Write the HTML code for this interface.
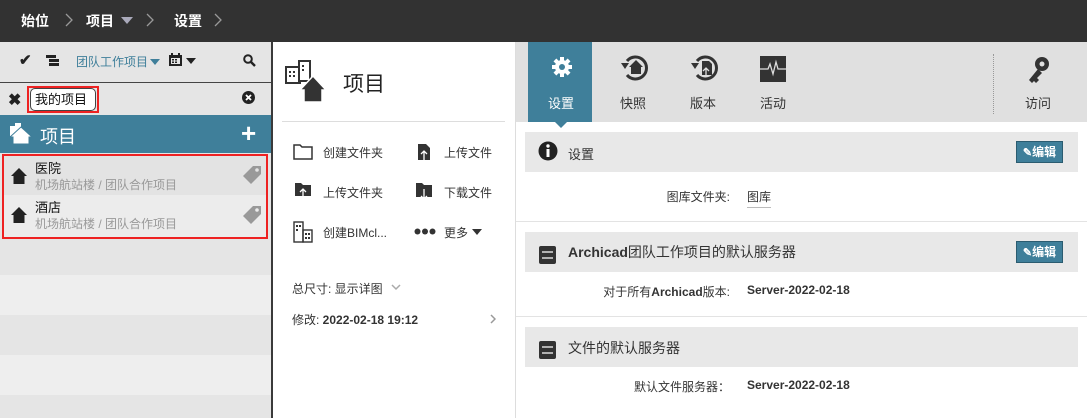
<!DOCTYPE html>
<html><head><meta charset="utf-8"><style>
*{margin:0;padding:0;box-sizing:border-box}
body{width:1087px;height:418px;overflow:hidden;font-family:"Liberation Sans","Noto Sans CJK SC",sans-serif;font-size:13px;color:#333;background:#fff;position:relative}
.a{position:absolute}
.top{left:0;top:0;width:1087px;height:42px;background:#323232;color:#fff;font-size:14px;font-weight:bold}
.left{left:0;top:42px;width:271px;height:376px;background:#e5e5e5}
.vb{left:271px;top:42px;width:2px;height:376px;background:#3a3a3a}
.stripe{left:0;width:271px;height:40px}
.btn{background:#3f7f9a;color:#fff;font-size:12px;font-weight:bold;border:1px solid #2b5c70;height:22px;width:47px;line-height:20px;text-align:center}
.hdr{left:525px;width:553px;height:40px;background:#e8e8e8}
.lbl{font-size:12px;color:#333}
</style></head><body>
<div class="a top">
 <span class="a" style="left:21px;top:11px">始位</span>
 <svg class="a" style="left:65px;top:13px" width="8" height="14"><path d="M1 1l6 6-6 6" stroke="#999" stroke-width="1.3" fill="none"/></svg>
 <span class="a" style="left:86px;top:11px">项目</span>
 <svg class="a" style="left:121px;top:17px" width="12" height="7"><path d="M0 0h12L6 7z" fill="#aab"/></svg>
 <svg class="a" style="left:146px;top:13px" width="8" height="14"><path d="M1 1l6 6-6 6" stroke="#999" stroke-width="1.3" fill="none"/></svg>
 <span class="a" style="left:174px;top:11px">设置</span>
 <svg class="a" style="left:214px;top:13px" width="8" height="14"><path d="M1 1l6 6-6 6" stroke="#999" stroke-width="1.3" fill="none"/></svg>
</div>
<div class="a left"></div>
<div class="a" style="left:0;top:82px;width:271px;height:1px;background:#444"></div>
<div class="a stripe" style="top:238px;height:37px;background:#e5e5e5"></div>
<div class="a stripe" style="top:275px;background:#eeeeee"></div>
<div class="a stripe" style="top:355px;background:#eeeeee"></div>
<span class="a" style="left:19px;top:51px;font-size:15px;font-weight:bold;color:#222">✔</span>
<svg class="a" style="left:46px;top:55px" width="13" height="12"><rect x="0" y="0" width="10" height="3" fill="#222"/><rect x="3" y="4" width="10" height="3" fill="#222"/><rect x="3" y="8" width="10" height="3" fill="#222"/></svg>
<span class="a" style="left:76px;top:53px;font-size:12px;color:#3f7f9a">团队工作项目</span>
<svg class="a" style="left:150px;top:59px" width="10" height="6"><path d="M0 0h10L5 6z" fill="#3f7f9a"/></svg>
<svg class="a" style="left:169px;top:53px" width="13" height="13"><rect x="0" y="2" width="13" height="11" fill="#222"/><rect x="2" y="5" width="9" height="6" fill="#e5e5e5"/><rect x="3" y="6" width="2" height="1.5" fill="#222"/><rect x="6" y="6" width="2" height="1.5" fill="#222"/><rect x="3" y="8.5" width="2" height="1.5" fill="#222"/><rect x="6" y="8.5" width="2" height="1.5" fill="#222"/><rect x="2" y="0" width="2" height="3" fill="#222"/><rect x="9" y="0" width="2" height="3" fill="#222"/></svg>
<svg class="a" style="left:186px;top:58px" width="10" height="6"><path d="M0 0h10L5 6z" fill="#222"/></svg>
<svg class="a" style="left:243px;top:54px" width="13" height="13"><circle cx="5" cy="5" r="3.8" fill="none" stroke="#222" stroke-width="2"/><path d="M8 8l4 4" stroke="#222" stroke-width="2.4"/></svg>
<span class="a" style="left:8px;top:90px;font-size:16px;font-weight:bold;color:#222">✖</span>
<div class="a" style="left:27px;top:86px;width:72px;height:27px;border:2px solid #e22"></div>
<div class="a" style="left:30px;top:88px;width:66px;height:23px;border:1px solid #444;border-radius:5px;background:#fff;font-size:13px;line-height:21px;padding-left:4px;color:#111">我的项目</div>
<svg class="a" style="left:242px;top:91px" width="13" height="13"><circle cx="6.5" cy="6.5" r="6.5" fill="#222"/><path d="M4 4l5 5M9 4l-5 5" stroke="#fff" stroke-width="1.8"/></svg>
<div class="a" style="left:0;top:115px;width:271px;height:38px;background:#3f7f9a"></div>
<svg class="a" style="left:9px;top:123px" width="24" height="22"><rect x="1" y="3" width="8" height="10" fill="#fff"/><rect x="6" y="0" width="6" height="10" fill="#fff"/><path d="M4 21V14l-3 0 11-10 11 10h-3v7z" fill="#fff" stroke="#3f7f9a" stroke-width="1"/></svg>
<span class="a" style="left:40px;top:123px;font-size:18px;color:#fff">项目</span>
<span class="a" style="left:241px;top:118px;font-size:26px;font-weight:bold;color:#fff">+</span>
<div class="a" style="left:2px;top:154px;width:266px;height:85px;border:2px solid #e22"></div>
<div class="a" style="left:4px;top:156px;width:262px;height:39px;background:#e3e3e3"></div>
<div class="a" style="left:4px;top:195px;width:262px;height:42px;background:#ececec"></div>
<svg class="a" style="left:10px;top:166px" width="18" height="18"><path d="M9 2L1 10h2.5v8h11v-8H17z" fill="#222"/></svg>
<svg class="a" style="left:10px;top:205px" width="18" height="18"><path d="M9 2L1 10h2.5v8h11v-8H17z" fill="#222"/></svg>
<span class="a" style="left:35px;top:158px;font-size:13px;color:#111">医院</span>
<span class="a" style="left:35px;top:176px;font-size:12px;color:#999">机场航站楼 / 团队合作项目</span>
<span class="a" style="left:35px;top:197px;font-size:13px;color:#111">酒店</span>
<span class="a" style="left:35px;top:215px;font-size:12px;color:#999">机场航站楼 / 团队合作项目</span>
<svg class="a" style="left:242px;top:165px" width="20" height="20"><path d="M11 1h8v8L9 19 1 11z" fill="#999"/><circle cx="15" cy="5" r="1.8" fill="#e3e3e3"/></svg>
<svg class="a" style="left:242px;top:205px" width="20" height="20"><path d="M11 1h8v8L9 19 1 11z" fill="#999"/><circle cx="15" cy="5" r="1.8" fill="#ececec"/></svg>
<div class="a vb"></div>
<svg class="a" style="left:284px;top:59px" width="46" height="44"><rect x="2" y="8" width="14" height="16" fill="#fff" stroke="#333" stroke-width="2"/><rect x="15" y="2" width="11" height="20" fill="#fff" stroke="#333" stroke-width="2"/><g fill="#333"><rect x="5" y="12" width="2" height="2"/><rect x="9" y="12" width="2" height="2"/><rect x="5" y="16" width="2" height="2"/><rect x="9" y="16" width="2" height="2"/><rect x="18" y="6" width="2" height="2"/><rect x="18" y="10" width="2" height="2"/></g><path d="M29 17L16 31h4v12h18V31h4z" fill="#333" stroke="#fff" stroke-width="1.5"/></svg>
<span class="a" style="left:343px;top:68px;font-size:21px;color:#222">项目</span>
<div class="a" style="left:282px;top:121px;width:223px;height:1px;background:#ddd"></div>
<svg class="a" style="left:293px;top:144px" width="20" height="16"><path d="M1 1h6l2 2h10v12H1z" fill="none" stroke="#333" stroke-width="1.5"/></svg>
<span class="a lbl" style="left:323px;top:144px">创建文件夹</span>
<svg class="a" style="left:417px;top:143px" width="14" height="18"><path d="M1 1h8l4 4v12H1z" fill="#333"/><path d="M7 17V8M4 11l3-3 3 3" stroke="#fff" stroke-width="1.3" fill="none"/></svg>
<span class="a lbl" style="left:444px;top:144px">上传文件</span>
<svg class="a" style="left:295px;top:183px" width="16" height="16"><path d="M0 0h6l2 2h8v11H0z" fill="#333"/><path d="M8 16V6M5 9l3-3 3 3" stroke="#fff" stroke-width="1.3" fill="none"/></svg>
<span class="a lbl" style="left:323px;top:184px">上传文件夹</span>
<svg class="a" style="left:416px;top:183px" width="16" height="18"><path d="M0 0h6l2 2h8v12H0z" fill="#333"/><path d="M8 6v10M5 13l3 3 3-3" stroke="#fff" stroke-width="1.3" fill="none"/></svg>
<span class="a lbl" style="left:444px;top:184px">下载文件</span>
<svg class="a" style="left:293px;top:221px" width="20" height="22"><rect x="1" y="1" width="9" height="20" fill="none" stroke="#333" stroke-width="1.4"/><rect x="10" y="9" width="9" height="12" fill="none" stroke="#333" stroke-width="1.4"/><g fill="#333"><rect x="3" y="4" width="2" height="2"/><rect x="6" y="4" width="2" height="2"/><rect x="3" y="8" width="2" height="2"/><rect x="12" y="12" width="2" height="2"/><rect x="15" y="12" width="2" height="2"/><rect x="12" y="16" width="2" height="2"/><rect x="15" y="16" width="2" height="2"/></g></svg>
<span class="a lbl" style="left:323px;top:224px">创建BIMcl...</span>
<svg class="a" style="left:414px;top:228px" width="22" height="7"><circle cx="3.5" cy="3.5" r="3" fill="#333"/><circle cx="11" cy="3.5" r="3" fill="#333"/><circle cx="18.5" cy="3.5" r="3" fill="#333"/></svg>
<span class="a lbl" style="left:444px;top:224px">更多</span>
<svg class="a" style="left:472px;top:229px" width="10" height="6"><path d="M0 0h10L5 6z" fill="#333"/></svg>
<span class="a lbl" style="left:292px;top:280px">总尺寸: 显示详图</span>
<svg class="a" style="left:391px;top:284px" width="10" height="7"><path d="M1 1l4 4 4-4" stroke="#aaa" stroke-width="1.5" fill="none"/></svg>
<span class="a lbl" style="left:292px;top:311px">修改: <b>2022-02-18 19:12</b></span>
<svg class="a" style="left:490px;top:314px" width="6" height="10"><path d="M1 1l4 4-4 4" stroke="#999" stroke-width="1.5" fill="none"/></svg>
<div class="a" style="left:515px;top:42px;width:1px;height:376px;background:#ddd"></div>
<div class="a" style="left:516px;top:42px;width:571px;height:80px;background:#e0e0e0"></div>
<div class="a" style="left:528px;top:42px;width:64px;height:80px;background:#3f7f9a"></div>
<svg class="a" style="left:554px;top:121px" width="14" height="8"><path d="M0 0h14L7 7z" fill="#3f7f9a"/></svg>
<svg class="a" style="left:550px;top:55px" width="24" height="24"><g fill="#fff"><circle cx="12" cy="12" r="7"/><rect x="10" y="2" width="4" height="20"/><rect x="2" y="10" width="20" height="4"/><rect x="10" y="2" width="4" height="20" transform="rotate(45 12 12)"/><rect x="10" y="2" width="4" height="20" transform="rotate(-45 12 12)"/></g><circle cx="12" cy="12" r="3" fill="#3f7f9a"/></svg>
<span class="a" style="left:548px;top:93px;font-size:13px;color:#fff">设置</span>
<svg class="a" style="left:619px;top:53px" width="32" height="30"><path d="M8 22A11 11 0 1 0 8 8" fill="none" stroke="#333" stroke-width="3"/><path d="M2 10h8l-4 6z" fill="#333"/><path d="M17 7l-7 7h2v7h10v-7h2z" fill="#333"/></svg>
<span class="a" style="left:620px;top:93px;font-size:13px">快照</span>
<svg class="a" style="left:689px;top:53px" width="32" height="30"><path d="M8 22A11 11 0 1 0 8 8" fill="none" stroke="#333" stroke-width="3"/><path d="M2 10h8l-4 6z" fill="#333"/><path d="M13 8h7l3 3v11h-10z" fill="#333"/><path d="M17 24v-9M14 18l3-3 3 3" stroke="#e0e0e0" stroke-width="1.3" fill="none"/></svg>
<span class="a" style="left:690px;top:93px;font-size:13px">版本</span>
<svg class="a" style="left:760px;top:56px" width="26" height="26"><rect width="26" height="26" fill="#333"/><path d="M0 13h8l2-5 3 10 3-12 2 7h8" stroke="#ddd" stroke-width="1.3" fill="none"/></svg>
<span class="a" style="left:760px;top:93px;font-size:13px">活动</span>
<div class="a" style="left:993px;top:54px;width:0;height:60px;border-left:1px dotted #999"></div>
<svg class="a" style="left:1026px;top:55px" width="26" height="30"><circle cx="16" cy="9" r="7" fill="#333"/><circle cx="16" cy="9" r="2.5" fill="#e0e0e0"/><path d="M12 14L3 25l3 3 2-2 2 2 3-3-2-2 5-5z" fill="#333"/></svg>
<span class="a" style="left:1025px;top:93px;font-size:13px">访问</span>
<div class="a hdr" style="top:132px"></div>
<svg class="a" style="left:538px;top:141px" width="20" height="20"><circle cx="10" cy="10" r="9.5" fill="#222"/><rect x="8.5" y="8" width="3" height="8" fill="#fff"/><circle cx="10" cy="5" r="1.7" fill="#fff"/></svg>
<span class="a" style="left:568px;top:144px;font-size:13px">设置</span>
<div class="a btn" style="left:1016px;top:141px"><span style="font-size:11px">✎</span>编辑</div>
<span class="a lbl" style="left:650px;top:188px;width:80px;text-align:right">图库文件夹:</span>
<span class="a lbl" style="left:747px;top:188px;border-bottom:1px solid #bbb;padding-bottom:2px">图库</span>
<div class="a" style="left:516px;top:221px;width:571px;height:1px;background:#e3e3e3"></div>
<div class="a hdr" style="top:232px"></div>
<svg class="a" style="left:539px;top:246px" width="17" height="18"><rect width="17" height="18" rx="2" fill="#333"/><path d="M3 6h11M3 12h11" stroke="#fff" stroke-width="1.3"/></svg>
<span class="a" style="left:568px;top:242px;font-size:14px;font-weight:bold">Archicad<span style="font-weight:normal">团队工作项目的默认服务器</span></span>
<div class="a btn" style="left:1016px;top:241px"><span style="font-size:11px">✎</span>编辑</div>
<span class="a lbl" style="left:590px;top:283px;width:140px;text-align:right">对于所有<b>Archicad</b>版本:</span>
<span class="a lbl" style="left:747px;top:283px;font-weight:bold">Server-2022-02-18</span>
<div class="a" style="left:516px;top:316px;width:571px;height:1px;background:#e3e3e3"></div>
<div class="a hdr" style="top:327px"></div>
<svg class="a" style="left:539px;top:341px" width="17" height="18"><rect width="17" height="18" rx="2" fill="#333"/><path d="M3 6h11M3 12h11" stroke="#fff" stroke-width="1.3"/></svg>
<span class="a" style="left:568px;top:338px;font-size:14px">文件的默认服务器</span>
<span class="a lbl" style="left:590px;top:378px;width:140px;text-align:right">默认文件服务器：</span>
<span class="a lbl" style="left:747px;top:378px;font-weight:bold">Server-2022-02-18</span>
</body></html>
